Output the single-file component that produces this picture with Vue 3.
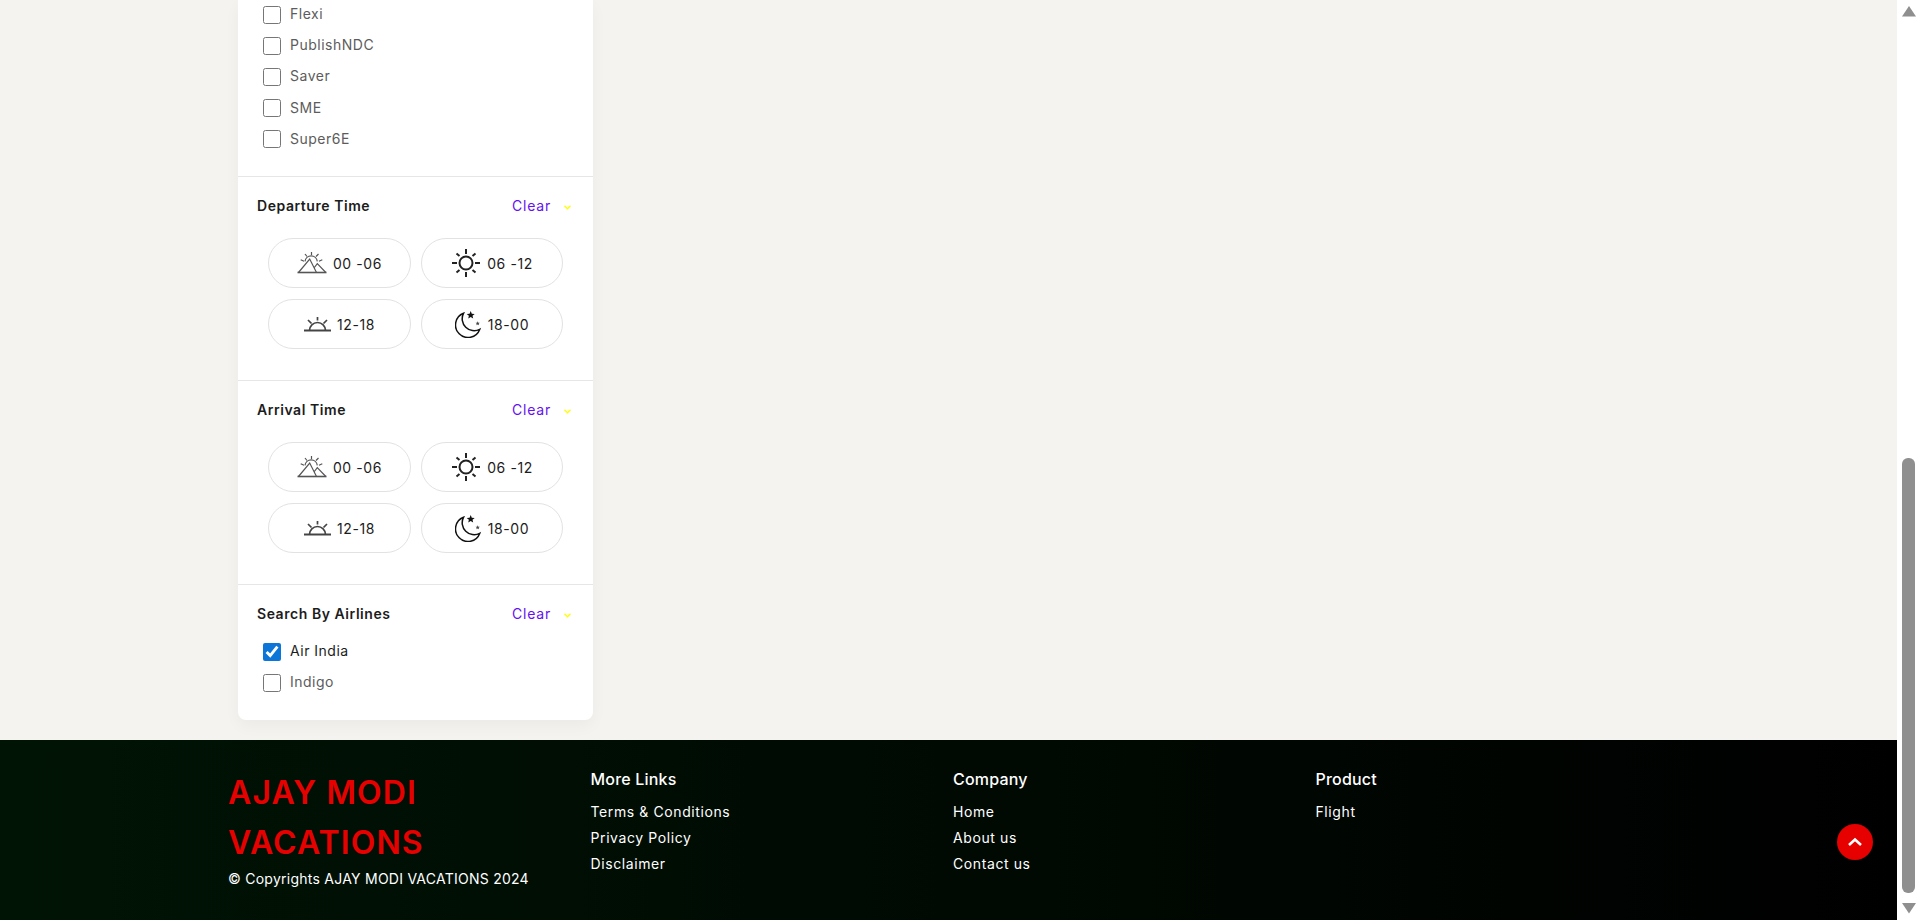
<script setup>
const fareTypes = ['Flexi', 'PublishNDC', 'Saver', 'SME', 'Super6E']
const timeFilters = ['Departure Time', 'Arrival Time']
const slots = [
  { icon: 'dawn', label: '00 -06' },
  { icon: 'sun', label: '06 -12' },
  { icon: 'dusk', label: '12-18' },
  { icon: 'moon', label: '18-00' }
]
const airlines = [
  { name: 'Air India', checked: true },
  { name: 'Indigo', checked: false }
]
const footerCols = [
  { title: 'More Links', links: ['Terms & Conditions', 'Privacy Policy', 'Disclaimer'] },
  { title: 'Company', links: ['Home', 'About us', 'Contact us'] },
  { title: 'Product', links: ['Flight'] }
]
</script>

<template>
  <div class="page">
    <div class="content">
      <main class="main">
        <aside class="card">
          <section class="group first">
            <label v-for="fare in fareTypes" :key="fare" class="check">
              <input type="checkbox" />
              <span>{{ fare }}</span>
            </label>
          </section>

          <section v-for="title in timeFilters" :key="title" class="group">
            <div class="group-head">
              <h4>{{ title }}</h4>
              <a class="clear">Clear</a>
              <svg class="chev" width="7" height="5" viewBox="0 0 7 5">
                <path d="M.5.800l3 3 3-3" fill="none" stroke="#ffff00" stroke-width="1.300" />
              </svg>
            </div>
            <div class="slots">
              <button v-for="slot in slots" :key="slot.label" class="slot">
                <svg v-if="slot.icon === 'dawn'" width="30" height="22" viewBox="0 0 30 22" fill="none" stroke="#555" stroke-width="1.2">
                  <path d="M0.500 20.500h29" stroke-width="1.600" />
                  <path d="M1.500 20.500L12.700 7l6.800 13.500M17 16l3.300-4.300 8.500 8.800" />
                  <path d="M8 9.300a6.200 6.200 0 0 1 12.300 0" />
                  <path d="M14.500 0v3M8 2l2 2.500M21.500 2L19 4.500M3.700 7.700L7 9.300M25.300 7.700L22 9.300" />
                </svg>
                <svg v-else-if="slot.icon === 'sun'" width="30" height="30" viewBox="0 0 30 30" fill="none" stroke="#222" stroke-width="2">
                  <circle cx="15" cy="15" r="6.500" />
                  <path d="M15 1v5M15 24v5M1 15h5M24 15h5M5.500 5.500l3 2.500M24.500 5.500l-3 2.500M5.500 24.500l3-2.500M24.500 24.500l-3-2.500" />
                </svg>
                <svg v-else-if="slot.icon === 'dusk'" width="27" height="15" viewBox="0 0 27 15" fill="none" stroke="#444" stroke-width="1.700">
                  <path d="M0 13.500h27" stroke-width="2" />
                  <path d="M5.500 13.500a8 8 0 0 1 16 0" />
                  <path d="M13.500 0v3.500M4 3l3.500 3.500M23 3l-3.500 3.500" />
                </svg>
                <svg v-else width="27" height="27" viewBox="0 0 27 27">
                  <path d="M8.500 2.300A12.500 12.500 0 1 0 24.700 18.400 12 12 0 0 1 8.500 2.300z" fill="none" stroke="#111" stroke-width="1.500" />
                  <path d="M15.700 0l1.100 2.700 2.900.2-2.200 1.900.7 2.800-2.500-1.500-2.500 1.500.7-2.800-2.200-1.900 2.900-.2z" fill="#111" />
                  <path d="M22.700 10.300l.6 1.400 1.500.1-1.100 1 .3 1.500-1.300-.8-1.300.8.300-1.500-1.100-1 1.500-.1z" fill="#444" />
                </svg>
                <span>{{ slot.label }}</span>
              </button>
            </div>
          </section>

          <section class="group last">
            <div class="group-head">
              <h4>Search By Airlines</h4>
              <a class="clear">Clear</a>
              <svg class="chev" width="7" height="5" viewBox="0 0 7 5">
                <path d="M.5.800l3 3 3-3" fill="none" stroke="#ffff00" stroke-width="1.300" />
              </svg>
            </div>
            <label v-for="a in airlines" :key="a.name" class="check" :class="{ on: a.checked }">
              <input type="checkbox" :checked="a.checked" />
              <span>{{ a.name }}</span>
            </label>
          </section>
        </aside>
      </main>

      <footer class="footer">
        <div class="foot-col">
          <h2 class="brand">AJAY MODI VACATIONS</h2>
          <p class="copy">© Copyrights AJAY MODI VACATIONS 2024</p>
        </div>
        <div v-for="col in footerCols" :key="col.title" class="foot-col links">
          <h5>{{ col.title }}</h5>
          <a v-for="link in col.links" :key="link">{{ link }}</a>
        </div>
        <button class="to-top">
          <svg width="16" height="10" viewBox="0 0 16 10">
            <path d="M2 8l6-5.500L14 8" fill="none" stroke="#fff" stroke-width="2.500" />
          </svg>
        </button>
      </footer>
    </div>

    <div class="scrollbar">
      <svg width="14" height="11" viewBox="0 0 14 11"><path d="M7 0l7 10.500H0z" fill="#8f8f8f" /></svg>
      <div class="track"><div class="thumb"></div></div>
      <svg width="14" height="11" viewBox="0 0 14 11"><path d="M7 10.500L14 0H0z" fill="#8f8f8f" /></svg>
    </div>
  </div>
</template>

<style scoped>
.page {
  display: flex;
  height: 920px;
  overflow: hidden;
  font-family: Inter, "Noto Sans", sans-serif;
  background: #f5f3ef;
}

.content {
  flex: 1;
  min-width: 0;
}

.main {
  height: 740px;
  padding-left: 238px;
  overflow: hidden;
  box-sizing: border-box;
}

.card {
  width: 355px;
  height: 720px;
  background: #fff;
  border-radius: 0 0 8px 8px;
  box-shadow: 0 6px 16px rgba(0, 0, 0, 0.04);
}

.group {
  height: 203px;
  border-bottom: 1px solid #e6e6e6;
}

.group.first {
  display: flow-root;
  height: 176px;
}

.group.first .check:first-child {
  margin-top: -1px;
}

.group.last {
  height: auto;
  border-bottom: 0;
}

.group-head {
  display: flex;
  align-items: center;
  height: 22px;
  padding: 17px 0 0 19px;
  margin-bottom: 22px;
}

.group.last .group-head {
  margin-bottom: 12px;
}

.group-head h4 {
  flex: 1;
  margin: 0;
  font-size: 14px;
  font-weight: 600;
  letter-spacing: 0.55px;
  color: #1c1c1c;
}

.clear {
  color: #6610f2;
  font-size: 14px;
  letter-spacing: 0.8px;
}

.chev {
  margin: 4px 22px 0 13px;
}

.check {
  display: flex;
  align-items: center;
  height: 31.2px;
  padding-left: 25px;
  font-size: 14px;
  letter-spacing: 0.5px;
  color: #5c5c5c;
}

.check span {
  padding-bottom: 2px;
}

.check.on {
  color: #1c1c1c;
}

.check input {
  width: 18px;
  height: 18px;
  margin: 0 9px 0 0;
  accent-color: #0b76d8;
}

.slots {
  display: grid;
  grid-template-columns: 143px 142px;
  grid-auto-rows: 50px;
  gap: 11px 10px;
  padding-left: 30px;
}

.slot {
  display: flex;
  align-items: center;
  justify-content: center;
  gap: 6px;
  padding: 0;
  background: #fff;
  border: 1px solid #e2e2e2;
  border-radius: 25px;
  font-family: inherit;
  font-size: 14px;
  letter-spacing: 0.6px;
  color: #1c1c1c;
}

.footer {
  position: relative;
  display: grid;
  grid-template-columns: repeat(4, 362.5px);
  height: 180px;
  padding-left: 228px;
  box-sizing: border-box;
  background: linear-gradient(90deg, #001405, #000);
  color: #fff;
}

.brand {
  width: 320px;
  margin: 28px 0 0;
  font-size: 32px;
  font-weight: 600;
  letter-spacing: 1.1px;
  line-height: 50px;
  color: #e60000;
}

.copy {
  margin: 0;
  font-size: 14px;
  letter-spacing: 0.25px;
  line-height: 22px;
}

.links {
  display: flex;
  flex-direction: column;
  padding-top: 28px;
}

.links h5 {
  margin: 0 0 9px;
  font-size: 16px;
  font-weight: 500;
  letter-spacing: 0.2px;
  line-height: 22px;
}

.links a {
  font-size: 14px;
  letter-spacing: 0.6px;
  line-height: 26px;
}

.to-top {
  position: absolute;
  left: 1837px;
  top: 84px;
  display: flex;
  align-items: center;
  justify-content: center;
  width: 36px;
  height: 36px;
  padding: 0;
  border: 0;
  border-radius: 50%;
  background: #e60000;
}

.scrollbar {
  display: flex;
  flex-direction: column;
  align-items: center;
  width: 23px;
  padding: 6px 0;
  box-sizing: border-box;
  background: #fff;
}

.track {
  flex: 1;
  width: 13px;
  padding: 441px 0 10px;
  box-sizing: border-box;
}

.thumb {
  height: 100%;
  border-radius: 6px;
  background: #8f8f8f;
}
</style>
